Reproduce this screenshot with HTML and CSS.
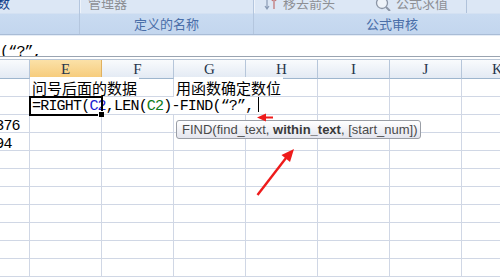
FILE: index.html
```html
<!DOCTYPE html>
<html lang="zh-CN">

<head>
    <meta charset="UTF-8">
    <title>Excel - FIND</title>
    <link rel="stylesheet" href="styles.css">
</head>

<body>
    <div class="ribbon">
        <div class="group group-first">
            <div class="group-top"><span class="cut cut-dark">数</span></div>
            <div class="group-label"></div>
        </div>
        <div class="group group-names">
            <div class="group-top"><span class="cut">管理器</span></div>
            <div class="group-label">定义的名称</div>
        </div>
        <div class="group group-audit">
            <div class="group-top">
                <span class="cut cut-icon">
                    <svg width="14" height="14" viewBox="0 0 14 14">
                        <path d="M3 1v10M1 9l2 3 2-3" stroke="#8a9bb5" stroke-width="1.2" fill="none"/>
                        <path d="M10 12V2M8 4l2-3 2 3" stroke="#c07070" stroke-width="1.2" fill="none"/>
                    </svg>
                    移去箭头
                </span>
                <span class="cut cut-icon second">
                    <svg width="16" height="14" viewBox="0 0 16 14">
                        <circle cx="7" cy="6" r="5.5" stroke="#8c96a6" stroke-width="1.3" fill="#eef3f9"/>
                        <path d="M11 10l4 4" stroke="#8c96a6" stroke-width="2"/>
                    </svg>
                    公式求值
                </span>
                <span class="mini-sep"></span>
            </div>
            <div class="group-label">公式审核</div>
        </div>
    </div>

    <div class="formula-bar"><span class="mono">(“?”,</span></div>
    <div class="bar-gap"></div>

    <div class="sheet">
        <div class="hd"></div>
        <div class="hd hd-active">E</div>
        <div class="hd">F</div>
        <div class="hd">G</div>
        <div class="hd">H</div>
        <div class="hd">I</div>
        <div class="hd">J</div>
        <div class="hd">K</div>

        <div class="cell"></div>
        <div class="cell"><span class="cjk">问号后面的数据</span></div>
        <div class="cell"></div>
        <div class="cell"><span class="cjk">用函数确定数位</span></div>
        <div class="cell"></div>
        <div class="cell"></div>
        <div class="cell"></div>
        <div class="cell"></div>

        <div class="cell"></div>
        <div class="cell cell-active">
            <span class="mono edit">=RIGHT(<span class="ref-blue">C2</span>,LEN(<span class="ref-green">C2</span>)-FIND(“?”,<span class="caret"></span></span>
        </div>
        <div class="cell"></div>
        <div class="cell"></div>
        <div class="cell"></div>
        <div class="cell"></div>
        <div class="cell"></div>
        <div class="cell"></div>

        <div class="cell"><span class="mono cut-left">5376</span></div>
        <div class="cell"></div><div class="cell"></div><div class="cell"></div><div class="cell"></div><div class="cell"></div><div class="cell"></div><div class="cell"></div>

        <div class="cell"><span class="mono cut-left">094</span></div>
        <div class="cell"></div><div class="cell"></div><div class="cell"></div><div class="cell"></div><div class="cell"></div><div class="cell"></div><div class="cell"></div>

        <div class="cell"></div><div class="cell"></div><div class="cell"></div><div class="cell"></div><div class="cell"></div><div class="cell"></div><div class="cell"></div><div class="cell"></div>
        <div class="cell"></div><div class="cell"></div><div class="cell"></div><div class="cell"></div><div class="cell"></div><div class="cell"></div><div class="cell"></div><div class="cell"></div>
        <div class="cell"></div><div class="cell"></div><div class="cell"></div><div class="cell"></div><div class="cell"></div><div class="cell"></div><div class="cell"></div><div class="cell"></div>
        <div class="cell"></div><div class="cell"></div><div class="cell"></div><div class="cell"></div><div class="cell"></div><div class="cell"></div><div class="cell"></div><div class="cell"></div>
        <div class="cell"></div><div class="cell"></div><div class="cell"></div><div class="cell"></div><div class="cell"></div><div class="cell"></div><div class="cell"></div><div class="cell"></div>
        <div class="cell"></div><div class="cell"></div><div class="cell"></div><div class="cell"></div><div class="cell"></div><div class="cell"></div><div class="cell"></div><div class="cell"></div>
        <div class="cell"></div><div class="cell"></div><div class="cell"></div><div class="cell"></div><div class="cell"></div><div class="cell"></div><div class="cell"></div><div class="cell"></div>
    </div>

    <!-- function tooltip -->
    <div class="tooltip">FIND(find_text, <b>within_text</b>, [start_num])</div>

    <!-- red annotation arrows -->
    <svg class="arrows" width="500" height="280" viewBox="0 0 500 280">
        <path d="M264 117.5H273" stroke="#ee1b1b" stroke-width="2"/>
        <path d="M257 117.5L266 113.5V121.5Z" fill="#ee1b1b"/>
        <path d="M257.5 195L286 158" stroke="#ee1b1b" stroke-width="2.4"/>
        <path d="M294 149L281.5 155L290 162Z" fill="#ee1b1b"/>
    </svg>
</body>

</html>
```

FILE: styles.css
```css
* {
    box-sizing: border-box;
    margin: 0;
    padding: 0;
}

body {
    width: 500px;
    height: 280px;
    overflow: hidden;
    background-color: #ffffff;
    font-family: 'Noto Sans CJK SC', sans-serif;
    position: relative;
}

/* ribbon */

.ribbon {
    display: flex;
    height: 35px;
    background-color: #dce7f5;
    border-bottom: 1px solid #a9bcd6;
    overflow: hidden;
}

.group {
    display: flex;
    flex-direction: column;
    border-right: 1px solid #b4c6de;
    box-shadow: 1px 0 0 #eef3fa;
}

.group-first {
    width: 80px;
}

.group-names {
    width: 174px;
}

.group-audit {
    flex: 1;
    border-right: none;
}

.group-top {
    height: 13px;
    display: flex;
    align-items: flex-end;
    padding-bottom: 4px;
    overflow: hidden;
    position: relative;
}

.cut {
    font-size: 13px;
    line-height: 13px;
    color: #8d8f94;
    margin-left: 8px;
    white-space: nowrap;
}

.cut-dark {
    color: #15428b;
    margin-left: -3px;
}

.cut-icon {
    display: flex;
    align-items: flex-end;
    gap: 5px;
    margin-left: 10px;
}

.cut-icon svg {
    margin-bottom: -2px;
}

.second {
    margin-left: 40px;
}

.mini-sep {
    width: 1px;
    height: 13px;
    margin-left: 18px;
    margin-bottom: -4px;
    background-color: #b0c2da;
}

.group-label {
    flex: 1;
    background: linear-gradient(#c9dbf1, #c3d6ee);
    border-top: 1px solid #d4e1f2;
    color: #4a6ea8;
    font-size: 13px;
    line-height: 19px;
    text-align: center;
}

.group-audit .group-label {
    padding-left: 8px;
    text-align: left;
    text-indent: 104px;
}

/* formula bar */

.formula-bar {
    height: 22px;
    border-top: 1px solid #e6edf6;
    border-bottom: 1px solid #9aa4b1;
    padding-top: 1px;
    background-color: #ffffff;
    overflow: hidden;
}

.bar-gap {
    height: 3px;
    background-color: #ffffff;
    border-bottom: 1px solid #b9c6d6;
}

.mono {
    font-family: 'Liberation Mono', monospace;
    font-size: 15px;
    letter-spacing: -0.8px;
    color: #000000;
    white-space: nowrap;
}

/* sheet grid */

.sheet {
    display: grid;
    grid-template-columns: 30px repeat(7, 72px);
    grid-template-rows: 19px repeat(11, 18px);
    width: 534px;
}

.hd {
    background: linear-gradient(#f9fbfd, #e3eaf4);
    border-right: 1px solid #b6c6da;
    border-bottom: 1px solid #9eb6ce;
    font-family: 'Liberation Serif', serif;
    font-size: 15px;
    line-height: 18px;
    text-align: center;
    color: #27354a;
}

.hd-active {
    background: linear-gradient(#fbe1a8, #f6cb7b);
    border-right-color: #e0b160;
    border-bottom-color: #c49a52;
}

.cell {
    border-right: 1px solid #d0d7e5;
    border-bottom: 1px solid #d0d7e5;
    white-space: nowrap;
    overflow: visible;
    line-height: 17px;
    min-width: 0;
}

.cell:nth-child(8n + 1) {
    overflow: hidden;
}

.cjk {
    font-family: 'Noto Sans CJK SC', sans-serif;
    font-size: 15px;
    line-height: 17px;
    color: #000000;
    padding-left: 2px;
    padding-right: 2px;
    background-color: #ffffff;
}

.cell-active {
    position: relative;
    z-index: 2;
    outline: 2px solid #000000;
    outline-offset: -1px;
}

.cell-active::after {
    content: '';
    position: absolute;
    right: -3px;
    bottom: -3px;
    width: 5px;
    height: 5px;
    background-color: #000000;
    border-left: 1px solid #ffffff;
    border-top: 1px solid #ffffff;
}

.edit {
    display: inline-block;
    padding-left: 2px;
    padding-right: 4px;
    background-color: #ffffff;
    line-height: 15px;
    vertical-align: top;
}

.ref-blue {
    color: #1a1ad0;
}

.ref-green {
    color: #0b7a17;
}

.caret {
    display: inline-block;
    width: 1px;
    height: 15px;
    margin-left: 5px;
    vertical-align: -2px;
    background-color: #000000;
}

.cut-left {
    display: inline-block;
    margin-left: -13px;
}

/* overlays */

.tooltip {
    position: absolute;
    left: 176px;
    top: 120px;
    width: 245px;
    height: 19px;
    padding-left: 5px;
    border: 1px solid #9a9ea6;
    border-radius: 3px;
    background: linear-gradient(#ffffff, #e4e5ee);
    font-family: 'Liberation Sans', sans-serif;
    font-size: 13px;
    line-height: 17px;
    color: #4a4a4a;
    white-space: nowrap;
}

.tooltip b {
    color: #3a3a3a;
}

.arrows {
    position: absolute;
    left: 0;
    top: 0;
    pointer-events: none;
}
```
